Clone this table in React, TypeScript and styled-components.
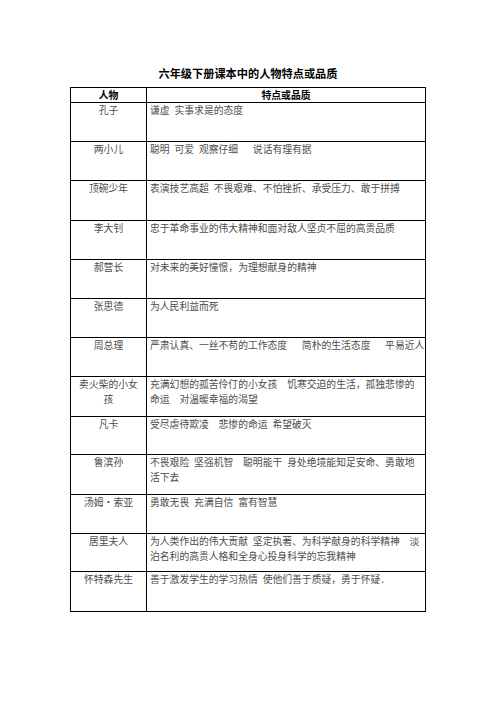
import React from "react";
import styled, { createGlobalStyle } from "styled-components";

interface IPerson {
  name: string;
  traits: string[];
  h: number;
}

const S = "\u2002"; // short gap
const M = "\u3000"; // one-character gap
const L = "\u3000\u2002"; // wide gap

const people: IPerson[] = [
  { name: "孔子", traits: [`谦虚${S}实事求是的态度`], h: 39 },
  { name: "两小儿", traits: [`聪明${S}可爱${S}观察仔细${L}说话有理有据`], h: 39 },
  {
    name: "顶碗少年",
    traits: [`表演技艺高超${S}不畏艰难、不怕挫折、承受压力、敢于拼搏`],
    h: 40,
  },
  { name: "李大钊", traits: ["忠于革命事业的伟大精神和面对敌人坚贞不屈的高贵品质"], h: 39 },
  { name: "郝营长", traits: ["对未来的美好憧憬，为理想献身的精神"], h: 39 },
  { name: "张思德", traits: ["为人民利益而死"], h: 39 },
  {
    name: "周总理",
    traits: [`严肃认真、一丝不苟的工作态度${L}简朴的生活态度${L}平易近人`],
    h: 39,
  },
  {
    name: "卖火柴的小女孩",
    traits: [`充满幻想的孤苦伶仃的小女孩${M}饥寒交迫的生活，孤独悲惨的`, `命运${M}对温暖幸福的渴望`],
    h: 40,
  },
  { name: "凡卡", traits: [`受尽虐待欺凌${M}悲惨的命运${S}希望破灭`], h: 38 },
  {
    name: "鲁滨孙",
    traits: [`不畏艰险${S}坚强机智${M}聪明能干${S}身处绝境能知足安命、勇敢地`, "活下去"],
    h: 40,
  },
  { name: "汤姆・索亚", traits: [`勇敢无畏${S}充满自信${S}富有智慧`], h: 39 },
  {
    name: "居里夫人",
    traits: [
      `为人类作出的伟大贡献${S}坚定执著、为科学献身的科学精神${M}淡`,
      "泊名利的高贵人格和全身心投身科学的忘我精神",
    ],
    h: 38,
  },
  {
    name: "怀特森先生",
    traits: [`善于激发学生的学习热情${S}使他们善于质疑，勇于怀疑．`],
    h: 40,
  },
];

function App() {
  return (
    <>
      <GlobalStyle />
      <Page>
        <Title>六年级下册课本中的人物特点或品质</Title>
        <Sheet>
          <colgroup>
            <col style={{ width: 76 }} />
            <col />
          </colgroup>
          <thead>
            <HeadRow>
              <HeadCell>人物</HeadCell>
              <HeadCell>特点或品质</HeadCell>
            </HeadRow>
          </thead>
          <tbody>
            {people.map((p) => (
              <Row key={p.name} $h={p.h}>
                <NameCell>{p.name}</NameCell>
                <TraitCell>
                  {p.traits.map((line) => (
                    <Line key={line}>{line}</Line>
                  ))}
                </TraitCell>
              </Row>
            ))}
          </tbody>
        </Sheet>
      </Page>
    </>
  );
}

const GlobalStyle = createGlobalStyle`
  body {
    margin: 0;
    background: #fff;
  }
`;

const Page = styled.div`
  width: 356px;
  margin: 0 auto;
  padding-top: 66px;
  font-family: "Noto Sans CJK SC", "Liberation Sans", sans-serif;
`;

const Title = styled.h1`
  margin: 0 0 7px;
  font-size: 11.2px;
  line-height: 14px;
  font-weight: 700;
  text-align: center;
  color: #000;
`;

const Sheet = styled.table`
  width: 100%;
  border-collapse: collapse;
  table-layout: fixed;
  font-size: 9.8px;
  color: #4d4d4d;
`;

const HeadRow = styled.tr`
  height: 15px;
`;

const HeadCell = styled.th`
  border: 1px solid #000;
  padding: 0;
  font-size: 9.8px;
  line-height: 13px;
  font-weight: 700;
  color: #000;
  text-align: center;
  vertical-align: middle;
`;

const Row = styled.tr<{ $h: number }>`
  height: ${(p) => p.$h}px;
`;

const NameCell = styled.td`
  border: 1px solid #000;
  padding: 0 4px;
  line-height: 14.5px;
  text-align: center;
  vertical-align: top;
`;

const TraitCell = styled.td`
  border: 1px solid #000;
  padding: 0 2px 0 3px;
  line-height: 14.5px;
  text-align: left;
  vertical-align: top;
`;

const Line = styled.div`
  white-space: pre;
`;

export default App;
